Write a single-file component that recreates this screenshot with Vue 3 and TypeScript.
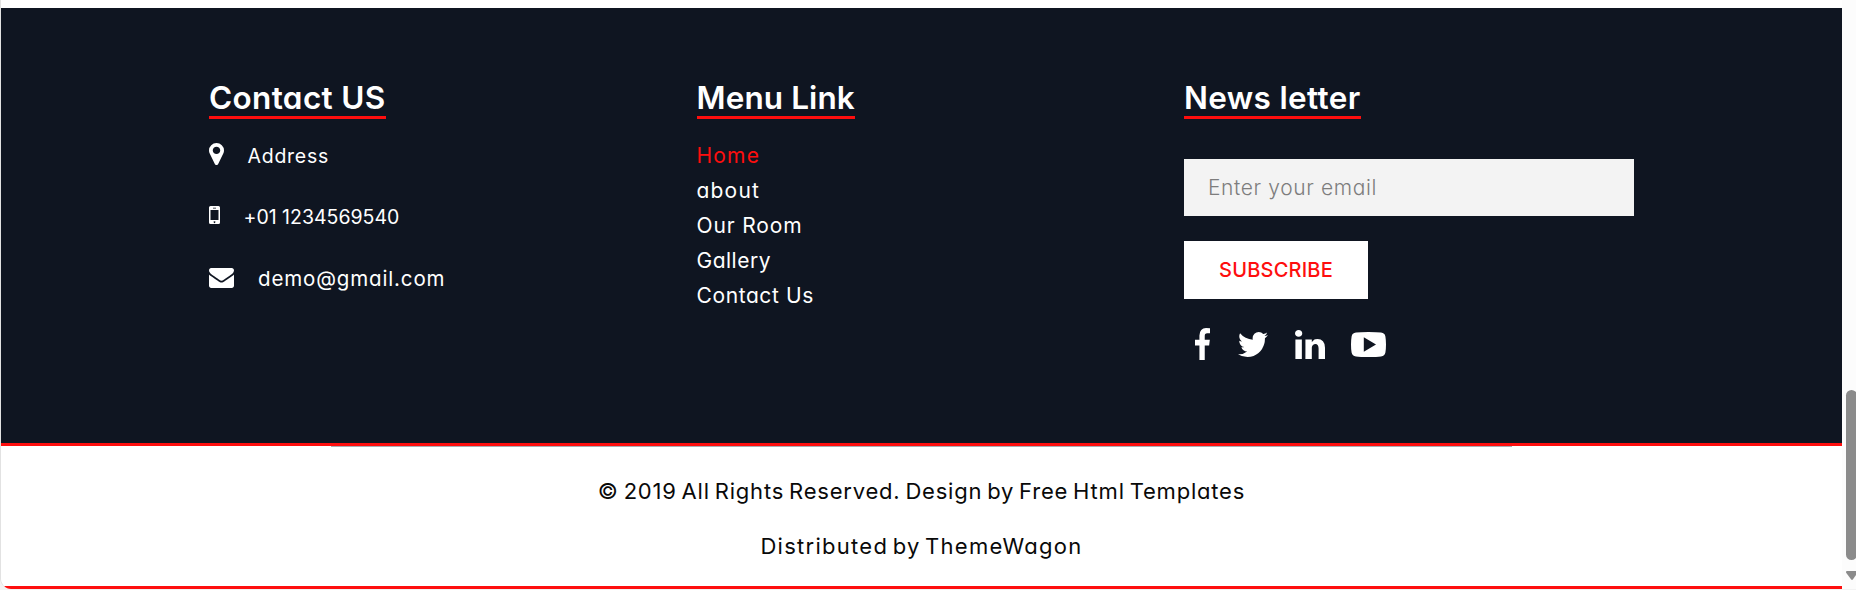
<script setup lang="ts">
interface MenuItem { label: string; cls: string; active?: boolean }

const menu: MenuItem[] = [
  { label: 'Home', cls: 'home', active: true },
  { label: 'about', cls: 'about' },
  { label: 'Our Room', cls: 'room' },
  { label: 'Gallery', cls: 'gallery' },
  { label: 'Contact Us', cls: 'contact' },
]
</script>

<template>
  <div class="window">
    <div class="page">
      <footer>
        <div class="footer">
          <section class="col">
            <h3 class="h-contact">Contact US</h3>
            <ul class="contacts">
              <li class="address">
                <svg width="15" height="22" viewBox="384 128 1024 1536" preserveAspectRatio="none"><path d="M1152 640q0-106-75-181t-181-75-181 75-75 181 75 181 181 75 181-75 75-181zm256 0q0 109-33 179l-364 774q-16 33-47.5 52t-67.5 19-67.5-19-46.5-52l-365-774q-33-70-33-179 0-212 150-362t362-150 362 150 150 362z" /></svg>
                <span>Address</span>
              </li>
              <li class="phone">
                <svg width="11" height="18" viewBox="0 0 11 18"><path fill-rule="evenodd" d="M1.5 0h8Q11 0 11 1.500v15Q11 18 9.500 18h-8Q0 18 0 16.500v-15Q0 0 1.500 0zM1.500 4v10h8V4zM4 1.800v.7h3v-.7zM5.500 15.200a.9.9 0 1 0 .01 0z" /></svg>
                <span>+01 1234569540</span>
              </li>
              <li class="mail">
                <svg width="25" height="20" viewBox="0 256 1792 1408" preserveAspectRatio="none"><path d="M1792 710v794q0 66-47 113t-113 47h-1472q-66 0-113-47t-47-113v-794q44 49 101 87 362 246 497 345 57 42 92.5 65.5t94.500 48 110 24.500h2q51 0 110-24.500t94.500-48 92.500-65.500q170-123 498-345 57-39 100-87zm0-294q0 79-49 151t-122 123q-376 261-468 325-10 7-42.500 31t-54 38.500-52 32.500-57.500 27-50 9h-2q-23 0-50-9t-57.500-27-52-32.500-54-38.500-42.500-31q-91-64-262-182.500t-205-142.500q-62-42-117-115.500t-55-136.500q0-78 41.500-130t118.500-52h1472q65 0 112.500 47t47.500 113z" /></svg>
                <span>demo@gmail.com</span>
              </li>
            </ul>
          </section>
          <section class="col">
            <h3 class="h-menu">Menu Link</h3>
            <ul class="menu">
              <li v-for="item in menu" :key="item.label" :class="[item.cls, { active: item.active }]">
                <span>{{ item.label }}</span>
              </li>
            </ul>
          </section>
          <section class="col">
            <h3 class="h-news">News letter</h3>
            <form @submit.prevent>
              <input type="text" placeholder="Enter your email" />
              <button type="submit">SUBSCRIBE</button>
            </form>
            <div class="social">
              <svg class="fb" width="15" height="32" viewBox="479 0 864 1664" preserveAspectRatio="none"><path d="M1343 12v264h-157q-86 0-116 36t-30 108v189h293l-39 296h-254v759h-306v-759h-255v-296h255v-218q0-186 104-288.5t277-102.5q147 0 228 12z" /></svg>
              <svg class="tw" width="30" height="25" viewBox="108 256 1576 1280" preserveAspectRatio="none"><path d="M1684 408q-67 98-162 167 1 14 1 42 0 130-38 259.5t-115.5 248.5-184.5 210.5-258 146-323 54.5q-271 0-496-145 35 4 78 4 225 0 401-138-105-2-188-64.5t-114-159.5q33 5 61 5 43 0 85-11-112-23-185.500-111.500t-73.500-205.500v-4q68 38 146 41-66-44-105-115t-39-154q0-88 44-163 121 149 294.500 238.500t371.500 99.500q-8-38-8-74 0-134 94.500-228.500t228.500-94.500q140 0 236 102 109-21 205-78-37 115-142 178 93-10 186-50z" /></svg>
              <svg class="li" width="30" height="29" viewBox="14 186 1538 1468" preserveAspectRatio="none"><path d="M365 663v991h-330v-991h330zm21-306q1 73-50.5 122t-135.500 49h-2q-82 0-132-49t-50-122q0-74 51.500-122.500t134.500-48.500 133 48.500 51 122.500zm1166 729v568h-329v-530q0-105-40.500-164.500t-126.500-59.500q-63 0-105.500 34.500t-63.500 85.500q-11 30-11 81v553h-329q2-399 2-647t-1-296l-1-48h329v144h-2q20-32 41-56t56.500-52 87-43.500 114.500-15.500q171 0 275 113.500t104 332.500z" /></svg>
              <svg class="yt" width="35" height="25" viewBox="0 0 35 25"><path fill-rule="evenodd" d="M17.500 0Q26 0 30 .6 33.800 1 34.400 4.500 35 8 35 12.500T34.400 20.500Q33.800 24 30 24.400 26 25 17.500 25T5 24.400Q1.200 24 .6 20.500 0 17 0 12.500T.6 4.500Q1.200 1 5 .6 9 0 17.500 0zM12.800 5.300v14.400l12.200-7.200z" /></svg>
            </div>
          </section>
        </div>
        <div class="copyright">
          <p class="rights">© 2019 All Rights Reserved. Design by Free Html Templates</p>
          <p class="dist">Distributed by ThemeWagon</p>
        </div>
      </footer>
    </div>
    <div class="scrollbar">
      <div class="thumb"></div>
      <svg width="10" height="9" viewBox="0 0 10 9"><path d="M1 0H10V4L7 8.300Q6 9.500 5 8.300L.3 2Q-.5.300 1 0z" /></svg>
    </div>
  </div>
</template>

<style>
body { background: #f3f3f3; overflow: hidden; }
</style>

<style scoped>
* { box-sizing: border-box; }
.window {
  display: flex;
  width: 1856px;
  height: 590px;
  font-family: Inter, "Liberation Sans", sans-serif;
  font-feature-settings: "cv11", "calt" 0;
  color: #fff;
}
.page {
  width: 1842px;
  height: 589px;
  padding-top: 8px;
  background: #fff;
  border-left: 1px solid #e2e2e2;
  border-bottom-left-radius: 11px;
  overflow: hidden;
}
.footer {
  height: 435px;
  padding: 72px 0 0 208px;
  display: grid;
  grid-template-columns: 487.5px 487.5px 450px;
  align-items: start;
  background: #0f1521;
}
h3 {
  display: inline-block;
  height: 39px;
  margin: 0;
  line-height: 35px;
  font-size: 31.500px;
  font-weight: 600;
  white-space: nowrap;
  border-bottom: 3px solid #fe0e0e;
}
.h-contact { width: 177px; letter-spacing: 0.35px; }
.h-menu { width: 158px; letter-spacing: 0.1px; }
.h-news { width: 177px; letter-spacing: 0.35px; }
ul { margin: 0; padding: 0; list-style: none; }
li { white-space: nowrap; }
svg { display: block; fill: #fff; flex: none; }
.contacts { padding-top: 20px; font-size: 19.5px; }
.contacts li { display: flex; height: 61.500px; line-height: 30px; }
.contacts .address svg { margin: 4px 23.500px 0 0; }
.contacts .phone svg { margin: 5px 23.500px 0 0; }
.contacts .mail svg { margin: 6px 24px 0 0; }
.contacts span { padding-top: 2px; }
.contacts .address span { letter-spacing: 0.75px; }
.contacts .phone span { padding-top: 1px; }
.contacts .mail span { font-size: 20.500px; letter-spacing: 0.85px; }
.menu { padding-top: 19px; font-size: 21px; }
.menu li { height: 35px; line-height: 35px; }
.menu .home { letter-spacing: 1.2px; }
.menu .about { letter-spacing: 1.2px; }
.menu .room { letter-spacing: 0.85px; }
.menu .gallery { letter-spacing: 0.5px; }
.menu .contact { letter-spacing: 0.6px; }
.active { color: #fe0e0e; }
form { padding-top: 40px; }
input {
  display: block;
  width: 450px;
  height: 57px;
  padding: 0 24px;
  border: 0;
  background: #f3f3f3;
  font: 300 21px Inter, "Liberation Sans", sans-serif;
  font-feature-settings: "cv11";
  letter-spacing: 0.62px;
}
input::placeholder { color: #7d7d7d; opacity: 1; }
button {
  display: block;
  width: 184px;
  height: 58px;
  margin-top: 25px;
  padding: 0 0 1px;
  border: 0;
  background: #fff;
  color: #fe0e0e;
  font: 500 20px Inter, "Liberation Sans", sans-serif;
  letter-spacing: 0.2px;
}
.social { display: flex; padding: 29px 0 0 11px; }
.tw { margin: 4px 0 0 28px; }
.li { margin: 2px 0 0 27px; }
.yt { margin: 4px 0 0 26px; }
.copyright {
  height: 146px;
  padding-top: 29px;
  border-top: 3px solid #fe0e0e;
  border-bottom: 3px solid #fe0e0e;
  color: #090909;
  text-align: center;
  font-size: 22px;
  background: linear-gradient(#a9adb5, #a9adb5) 330px 0 / 1181px 1px no-repeat #fff;
}
.copyright p { margin: 0; height: 55px; line-height: 32px; }
.rights { letter-spacing: 0.8px; word-spacing: -2.1px; }
.dist { letter-spacing: 1.28px; word-spacing: -3px; }
.scrollbar {
  width: 14px;
  height: 589px;
  padding: 390px 0 0 4px;
  background: #fcfcfc;
}
.thumb { width: 11px; height: 170px; border-radius: 5.500px; background: #8b8b8b; }
.scrollbar svg { margin-top: 11px; fill: #8b8b8b; }
</style>
